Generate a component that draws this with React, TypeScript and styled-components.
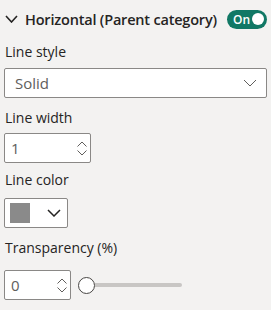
import React from "react";
import styled, { createGlobalStyle } from "styled-components";

const Global = createGlobalStyle`
  html, body { margin: 0; padding: 0; background: #f3f2f1; }
  body { font-family: "Open Sans", "Noto Sans", sans-serif; color: #252423; }
`;

const Pane = styled.div`
  width: 271px;
  height: 310px;
  background: #f3f2f1;
  box-sizing: border-box;
  padding: 0 4px;
  display: flex;
  flex-direction: column;
`;

const Header = styled.div`
  height: 38px;
  display: flex;
  align-items: center;
  gap: 7px;
  padding-left: 1px;
`;

const HeaderTitle = styled.div`
  flex: 1;
  font-size: 14.5px;
  font-weight: 600;
  letter-spacing: -0.2px;
  color: #252423;
  white-space: nowrap;
`;

const Toggle = styled.div`
  width: 40px;
  height: 19px;
  border-radius: 10px;
  background: #117865;
  display: flex;
  align-items: center;
  justify-content: space-between;
  padding: 0 3px 0 6px;
  box-sizing: border-box;
  color: #fff;
  font-size: 12px;
  font-weight: 600;
`;

const Knob = styled.span`
  width: 12px;
  height: 12px;
  border-radius: 50%;
  background: #fff;
`;

const Field = styled.div<{ $gap: number }>`
  display: flex;
  flex-direction: column;
  margin-top: ${(p) => p.$gap}px;
`;

const Label = styled.div<{ $mb: number }>`
  font-size: 14px;
  line-height: 20px;
  color: #252423;
  padding-left: 1px;
  margin-bottom: ${(p) => p.$mb}px;
`;

const Box = styled.div<{ $w: number }>`
  width: ${(p) => p.$w}px;
  height: 30px;
  box-sizing: border-box;
  border: 1px solid #8a8886;
  border-radius: 2px;
  background: #fff;
  display: flex;
  align-items: center;
  font-size: 15px;
  color: #605e5c;
`;

const BoxText = styled.span`
  flex: 1;
  padding-left: 10px;
`;

const NumText = styled.span`
  flex: 1;
  padding-left: 6px;
  color: #605e5c;
`;

const Spinner = styled.div`
  display: flex;
  flex-direction: column;
  gap: 3px;
  padding-right: 3px;
`;

const Swatch = styled.span`
  width: 20px;
  height: 20px;
  background: #8a8a8a;
  margin-left: 5px;
`;

const Spacer = styled.span`
  flex: 1;
`;

const Row = styled.div`
  display: flex;
  align-items: center;
  gap: 7px;
`;

const Slider = styled.div`
  display: flex;
  align-items: center;
  width: 104px;
`;

const Thumb = styled.span`
  width: 17px;
  height: 17px;
  border-radius: 50%;
  border: 1.5px solid #484644;
  box-sizing: border-box;
  background: #fff;
  flex: none;
`;

const Track = styled.span`
  flex: 1;
  height: 4px;
  background: #c8c6c4;
  border-radius: 0 2px 2px 0;
`;

const Chevron = ({ w, h, sw, color, mr = 0 }: { w: number; h: number; sw: number; color: string; mr?: number }) => (
  <svg width={w} height={h} viewBox={`0 0 ${w} ${h}`} style={{ marginRight: mr, flex: "none" }}>
    <polyline points={`1,1 ${w / 2},${h - 1} ${w - 1},1`} fill="none" stroke={color} strokeWidth={sw} />
  </svg>
);

const Up = () => (
  <svg width="10" height="6" viewBox="0 0 10 6">
    <polyline points="0.5,5.5 5,1 9.5,5.5" fill="none" stroke="#605e5c" strokeWidth="1" />
  </svg>
);
const Down = () => (
  <svg width="10" height="6" viewBox="0 0 10 6">
    <polyline points="0.5,0.5 5,5 9.5,0.5" fill="none" stroke="#605e5c" strokeWidth="1" />
  </svg>
);

const Spin = () => (
  <Spinner>
    <Up />
    <Down />
  </Spinner>
);

export default function App() {
  return (
    <>
      <Global />
      <Pane>
        <Header>
          <Chevron w={13} h={8} sw={1.6} color="#252423" />
          <HeaderTitle>Horizontal (Parent category)</HeaderTitle>
          <Toggle>
            On
            <Knob />
          </Toggle>
        </Header>
        <Field $gap={4}>
          <Label $mb={6}>Line style</Label>
          <Box $w={263}>
            <BoxText>Solid</BoxText>
            <Chevron w={14} h={8} sw={1} color="#605e5c" mr={9} />
          </Box>
        </Field>
        <Field $gap={10}>
          <Label $mb={5}>Line width</Label>
          <Box $w={87}>
            <NumText>1</NumText>
            <Spin />
          </Box>
        </Field>
        <Field $gap={7}>
          <Label $mb={8}>Line color</Label>
          <Box $w={64}>
            <Swatch />
            <Spacer />
            <Chevron w={14} h={8} sw={1.5} color="#252423" mr={6} />
          </Box>
        </Field>
        <Field $gap={10}>
          <Label $mb={12}>Transparency (%)</Label>
          <Row>
            <Box $w={67}>
              <NumText>0</NumText>
              <Spin />
            </Box>
            <Slider>
              <Thumb />
              <Track />
            </Slider>
          </Row>
        </Field>
      </Pane>
    </>
  );
}
